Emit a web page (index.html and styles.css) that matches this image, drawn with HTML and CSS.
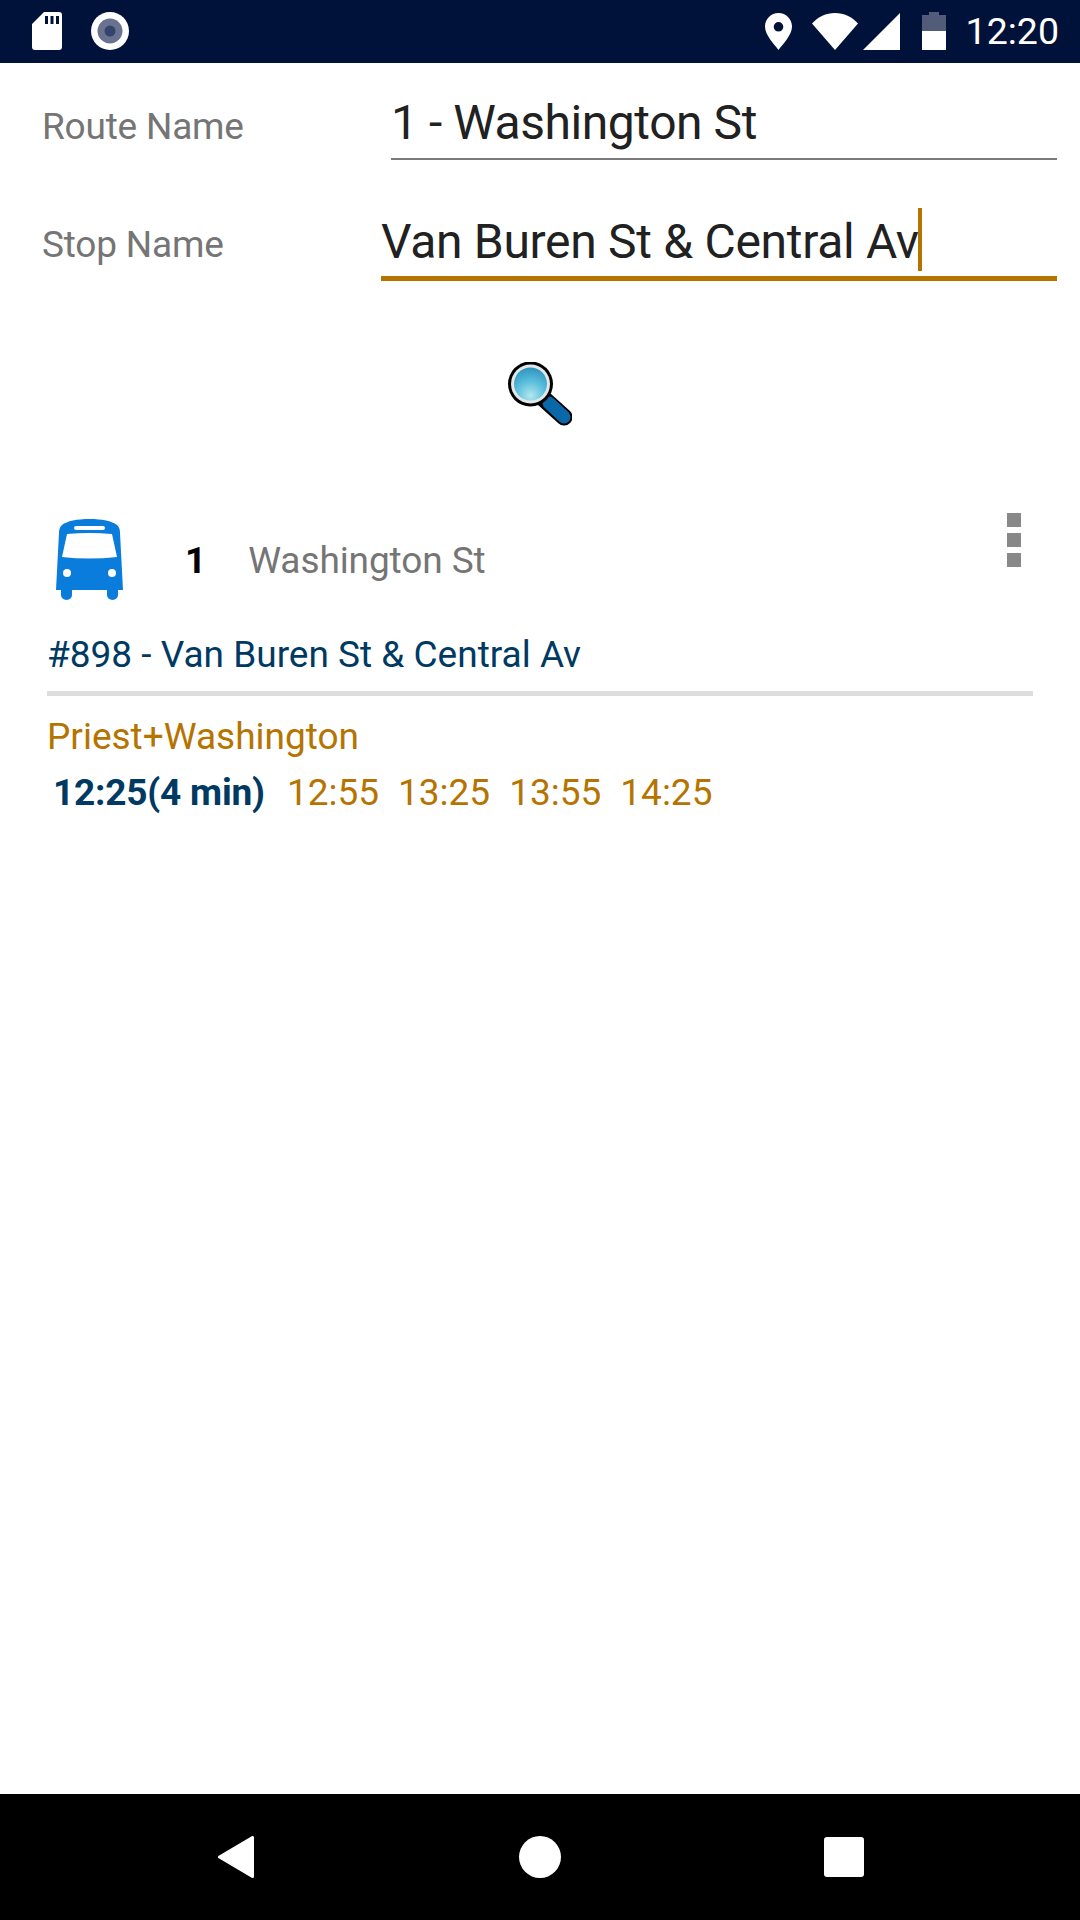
FILE: index.html
```html
<!DOCTYPE html>
<html lang="en">
<head>
  <meta charset="UTF-8">
  <title>Route Search</title>
  <link rel="stylesheet" href="styles.css">
</head>
<body>
  <div class="status-bar">
    <div class="status-left">
      <svg class="ic-sd" viewBox="0 0 30 38"><path fill="#fff" fill-rule="evenodd" d="M12 0H27a3 3 0 0 1 3 3V35a3 3 0 0 1-3 3H3a3 3 0 0 1-3-3V12ZM13 4V12H16V4ZM18.500 4V12H21.500V4ZM24 4V12H27V4Z"/></svg>
      <svg class="ic-rec" viewBox="0 0 38 38"><circle cx="19" cy="19" r="19" fill="#fff"/><circle cx="19" cy="19" r="12.500" fill="#69738f"/><circle cx="19" cy="19" r="5.500" fill="#34436b"/></svg>
    </div>
    <div class="status-right">
      <svg class="ic-pin" viewBox="0 0 27 37"><path fill="#fff" fill-rule="evenodd" d="M13.500 0C6 0 0 6 0 13.500C0 22 9 31 13.500 37C18 31 27 22 27 13.500C27 6 21 0 13.500 0ZM13.500 9a4.800 4.800 0 1 1 0 9.600a4.800 4.800 0 0 1 0-9.600Z"/></svg>
      <svg class="ic-wifi" viewBox="0 0 46 37"><path fill="#fff" d="M0 10.500C6 4 14 0 23 0S40 4 46 10.500L23 37Z"/></svg>
      <svg class="ic-signal" viewBox="0 0 37 37"><path fill="#fff" d="M37 0V37H0Z"/></svg>
      <svg class="ic-batt" viewBox="0 0 24 38"><path fill="#525c78" d="M7 0H17V3H24V19H0V3H7Z"/><rect y="19" width="24" height="19" fill="#fff"/></svg>
      <span class="clock">12:20</span>
    </div>
  </div>

  <div class="content">
    <div class="form-row row-route">
      <label class="form-label">Route Name</label>
      <div class="form-field">1 - Washington St</div>
    </div>
    <div class="form-row row-stop">
      <label class="form-label">Stop Name</label>
      <div class="form-field focused">Van Buren St &amp; Central Av<span class="caret"></span></div>
    </div>

    <div class="search-btn">
      <svg class="ic-search" viewBox="0 0 64 64">
        <defs>
          <radialGradient id="lens" cx="0.5" cy="0.85" r="0.85">
            <stop offset="0" stop-color="#b4e6ee"/>
            <stop offset="0.5" stop-color="#5cbfdd"/>
            <stop offset="1" stop-color="#2f94c0"/>
          </radialGradient>
        </defs>
        <path d="M36 37L56 55" stroke="#000" stroke-width="17" stroke-linecap="round"/>
        <path d="M41 41L56 55" stroke="#0a68a8" stroke-width="13" stroke-linecap="round"/>
        <circle cx="22.500" cy="22" r="22.500" fill="#000"/>
        <circle cx="22.500" cy="22" r="19.500" fill="#e4e7e9"/>
        <circle cx="22.500" cy="22" r="16.500" fill="url(#lens)"/>
      </svg>
    </div>

    <div class="route-card">
      <div class="route-head">
        <svg class="ic-bus" viewBox="0 0 67 81">
          <path fill="#0a7cdc" fill-rule="evenodd" d="M33.500 0C46 0 56 2 61 6C63 8 64 10 64 14L67 71H62V76a5.500 5 0 0 1-11 0V71H16V76a5.500 5 0 0 1-11 0V71H0L3 14C3 10 4 8 6 6C11 2 21 0 33.500 0ZM20 7a2 2 0 0 0 0 4H47a2 2 0 0 0 0-4ZM11 15L6 38Q33 41 61 38L56 15Q33 13 11 15ZM11 50a4 4 0 1 0 0 8a4 4 0 0 0 0-8ZM56 50a4 4 0 1 0 0 8a4 4 0 0 0 0-8Z"/>
        </svg>
        <span class="route-num">1</span>
        <span class="route-name">Washington St</span>
        <div class="more-btn"><i></i><i></i><i></i></div>
      </div>
      <div class="stop-title">#898 - Van Buren St &amp; Central Av</div>
      <div class="divider"></div>
      <div class="dest">Priest+Washington</div>
      <div class="times">
        <span class="next-time">12:25(4 min)</span>
        <span>12:55</span>
        <span>13:25</span>
        <span>13:55</span>
        <span>14:25</span>
      </div>
    </div>
  </div>

  <div class="nav-bar">
    <svg class="ic-back" viewBox="0 0 36 42"><path fill="#fff" stroke="#fff" stroke-width="3" stroke-linejoin="round" d="M34.500 1.500V40.500L1.500 21Z"/></svg>
    <svg class="ic-home" viewBox="0 0 42 42"><circle cx="21" cy="21" r="21" fill="#fff"/></svg>
    <div class="ic-recent"></div>
  </div>
</body>
</html>
```

FILE: styles.css
```css
* {
  box-sizing: border-box;
}

html, body {
  margin: 0;
  height: 100%;
}

body {
  width: 1080px;
  height: 1920px;
  display: flex;
  flex-direction: column;
  font-family: 'Roboto', sans-serif;
  background: #fff;
}

svg {
  display: block;
}

.status-bar {
  height: 63px;
  background: #00123a;
  display: flex;
  justify-content: space-between;
  align-items: center;
  padding: 0 21px 1px 32px;
}

.status-left, .status-right {
  display: flex;
  align-items: center;
}

.ic-sd {
  width: 30px;
  height: 38px;
}

.ic-rec {
  width: 38px;
  height: 38px;
  margin-left: 29px;
}

.ic-pin {
  width: 27px;
  height: 37px;
}

.ic-wifi {
  width: 46px;
  height: 37px;
  margin-left: 20px;
}

.ic-signal {
  width: 37px;
  height: 37px;
  margin-left: 5px;
}

.ic-batt {
  width: 24px;
  height: 38px;
  margin-left: 22px;
}

.clock {
  color: #fff;
  font-size: 37.5px;
  margin-left: 20px;
}

.content {
  flex: 1;
}

.form-row {
  display: flex;
  align-items: flex-start;
  padding-right: 23px;
}

.row-route {
  height: 119px;
  padding-top: 30px;
}

.row-stop {
  height: 120px;
  padding-top: 28px;
}

.form-label {
  font-size: 37px;
  letter-spacing: -0.2px;
  color: #757575;
  padding-left: 42px;
  padding-top: 12px;
}

.row-route .form-label {
  width: 391px;
}

.row-stop .form-label {
  width: 381px;
  padding-top: 13px;
}

.form-field {
  flex: 1;
  height: 67px;
  padding-top: 2px;
  font-size: 48px;
  letter-spacing: -0.45px;
  line-height: 56px;
  color: #212121;
  border-bottom: 2px solid #7a7a7a;
}

.focused {
  height: 71px;
  padding-top: 4px;
  letter-spacing: -0.3px;
  border-bottom: 5px solid #b57400;
}

.caret {
  display: inline-block;
  width: 4px;
  height: 63px;
  background: #b57400;
  margin: -19px 0 -1px -1px;
  vertical-align: -12px;
}

.search-btn {
  display: flex;
  justify-content: center;
  height: 210px;
  padding-top: 60px;
}

.ic-search {
  width: 64px;
  height: 64px;
}

.route-card {
  padding: 0 47px;
}

.route-head {
  display: flex;
  align-items: center;
  height: 94px;
  position: relative;
}

.ic-bus {
  width: 67px;
  height: 81px;
  margin-left: 9px;
}

.route-num {
  font-size: 37px;
  font-weight: 700;
  color: #000;
  margin-left: 62px;
  padding-top: 2px;
}

.route-name {
  font-size: 37px;
  letter-spacing: -0.1px;
  color: #757575;
  margin-left: 42px;
  padding-top: 2px;
}

.more-btn {
  position: absolute;
  right: 12px;
  top: 1px;
  display: flex;
  flex-direction: column;
  gap: 6px;
}

.more-btn i {
  display: block;
  width: 14px;
  height: 14px;
  background: #888;
}

.stop-title {
  font-size: 37px;
  color: #003a63;
  margin-top: 27px;
}

.divider {
  height: 5px;
  background: #ddd;
  margin-top: 15px;
}

.dest {
  font-size: 37px;
  color: #b57400;
  margin-top: 19px;
}

.times {
  display: flex;
  gap: 19px;
  font-size: 37px;
  color: #b57400;
  padding-left: 6px;
  margin-top: 13px;
}

.next-time {
  font-weight: 700;
  letter-spacing: -0.2px;
  color: #003a63;
  margin-right: 3px;
}

.nav-bar {
  height: 126px;
  background: #000;
  display: flex;
  align-items: center;
  padding: 0 216px 0 218px;
  justify-content: space-between;
}

.ic-back {
  width: 36px;
  height: 42px;
}

.ic-home {
  width: 42px;
  height: 42px;
  margin-left: 2px;
}

.ic-recent {
  width: 40px;
  height: 40px;
  background: #fff;
  border-radius: 3px;
}
```
